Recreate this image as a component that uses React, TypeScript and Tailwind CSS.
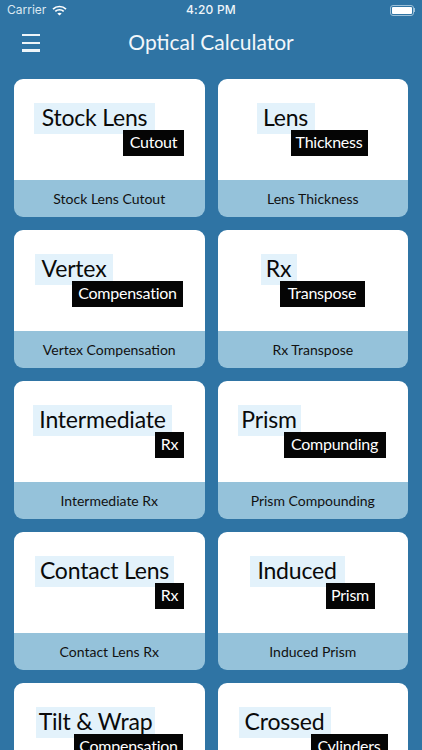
const font = "font-['Lato','Noto_Sans',sans-serif]";

type Card = {
  title: string;
  sub: string;
  footer: string;
  box: string;
  tag: string;
};

const cards: Card[] = [
  { title: "Stock Lens", sub: "Cutout", footer: "Stock Lens Cutout", box: "ml-[20px] w-[121px]", tag: "ml-[109px] w-[61px]" },
  { title: "Lens", sub: "Thickness", footer: "Lens Thickness", box: "ml-[39px] w-[58px]", tag: "ml-[73px] w-[77px]" },
  { title: "Vertex", sub: "Compensation", footer: "Vertex Compensation", box: "ml-[21px] w-[78px]", tag: "ml-[58px] w-[111px]" },
  { title: "Rx", sub: "Transpose", footer: "Rx Transpose", box: "ml-[43px] w-[36px]", tag: "ml-[62px] w-[85px]" },
  { title: "Intermediate", sub: "Rx", footer: "Intermediate Rx", box: "ml-[19px] w-[139px]", tag: "ml-[141px] w-[29px]" },
  { title: "Prism", sub: "Compunding", footer: "Prism Compounding", box: "ml-[20px] w-[63px]", tag: "ml-[66px] w-[102px]" },
  { title: "Contact Lens", sub: "Rx", footer: "Contact Lens Rx", box: "ml-[21px] w-[139px]", tag: "ml-[141px] w-[29px]" },
  { title: "Induced", sub: "Prism", footer: "Induced Prism", box: "ml-[32px] w-[95px]", tag: "ml-[108px] w-[49px]" },
  { title: "Tilt & Wrap", sub: "Compensation", footer: "Tilt & Wrap", box: "ml-[22px] w-[119px]", tag: "ml-[60px] w-[109px]" },
  { title: "Crossed", sub: "Cylinders", footer: "Crossed Cylinders", box: "ml-[21px] w-[92px]", tag: "ml-[93px] w-[77px]" },
];

function Tile({ c }: { c: Card }) {
  return (
    <div className="h-[138px] rounded-[9px] overflow-hidden flex flex-col shrink-0">
      <div className="h-[101px] bg-white pt-[24px] flex flex-col">
        <div className={`${c.box} h-[31px] pb-[2px] bg-[#e3f2fb] flex items-center justify-center text-[23px] tracking-[-0.2px] text-[#0a0a0a] whitespace-nowrap`}>
          {c.title}
        </div>
        <div className={`${c.tag} relative -mt-[4px] h-[26px] pb-[2px] bg-[#050505] flex items-center justify-center text-[16px] tracking-[-0.25px] text-white whitespace-nowrap`}>
          {c.sub}
        </div>
      </div>
      <div className="h-[37px] bg-[#95c2da] flex items-center justify-center text-[14px] text-[#111] whitespace-nowrap">
        {c.footer}
      </div>
    </div>
  );
}

export default function App() {
  return (
    <div className={`${font} w-[422px] h-[750px] overflow-hidden bg-[#2f74a4] text-white`}>
      <div className="h-[20px] px-[7px] flex items-center justify-between relative font-['Inter',sans-serif]">
        <div className="flex items-center gap-[6px] text-[12px] text-[#dbe8f1]">
          <span>Carrier</span>
          <svg width="15" height="11" viewBox="0 0 15 11" fill="none" stroke="white" strokeWidth="1.7">
            <path d="M1 4.2 C4.6 0.6 10.4 0.6 14 4.2" />
            <path d="M3.3 6.4 C5.6 4.2 9.4 4.2 11.7 6.4" />
            <path d="M7.5 10.6 L5.3 8.4 C6.5 7.4 8.5 7.4 9.7 8.4 Z" fill="white" stroke="none" />
          </svg>
        </div>
        <span className="absolute left-0 right-0 text-center text-[12px] tracking-[0.2px] font-medium text-[#eef5f9]">4:20 PM</span>
        <div className="flex items-center">
          <div className="w-[24px] h-[11px] rounded-[3px] border border-[#9cc0d8] p-[1px]">
            <div className="w-full h-full bg-white rounded-[1px]" />
          </div>
          <div className="w-[1px] h-[4px] bg-[#9cc0d8]" />
        </div>
      </div>
      <div className="h-[44px] relative flex items-center justify-center">
        <div className="absolute left-[22px] top-[14px] w-[18px] flex flex-col gap-[5.5px]">
          <div className="h-[2px] bg-[#eef5f9]" />
          <div className="h-[2px] bg-[#eef5f9]" />
          <div className="h-[3px] bg-[#eef5f9]" />
        </div>
        <span className="text-[21px] text-[#f2f7fa]">Optical Calculator</span>
      </div>
      <div className="grid grid-cols-[190.5px_190.5px] gap-x-[13px] gap-y-[13px] pl-[14px] pt-[15px]">
        {cards.map((c) => (
          <Tile key={c.title} c={c} />
        ))}
      </div>
    </div>
  );
}
